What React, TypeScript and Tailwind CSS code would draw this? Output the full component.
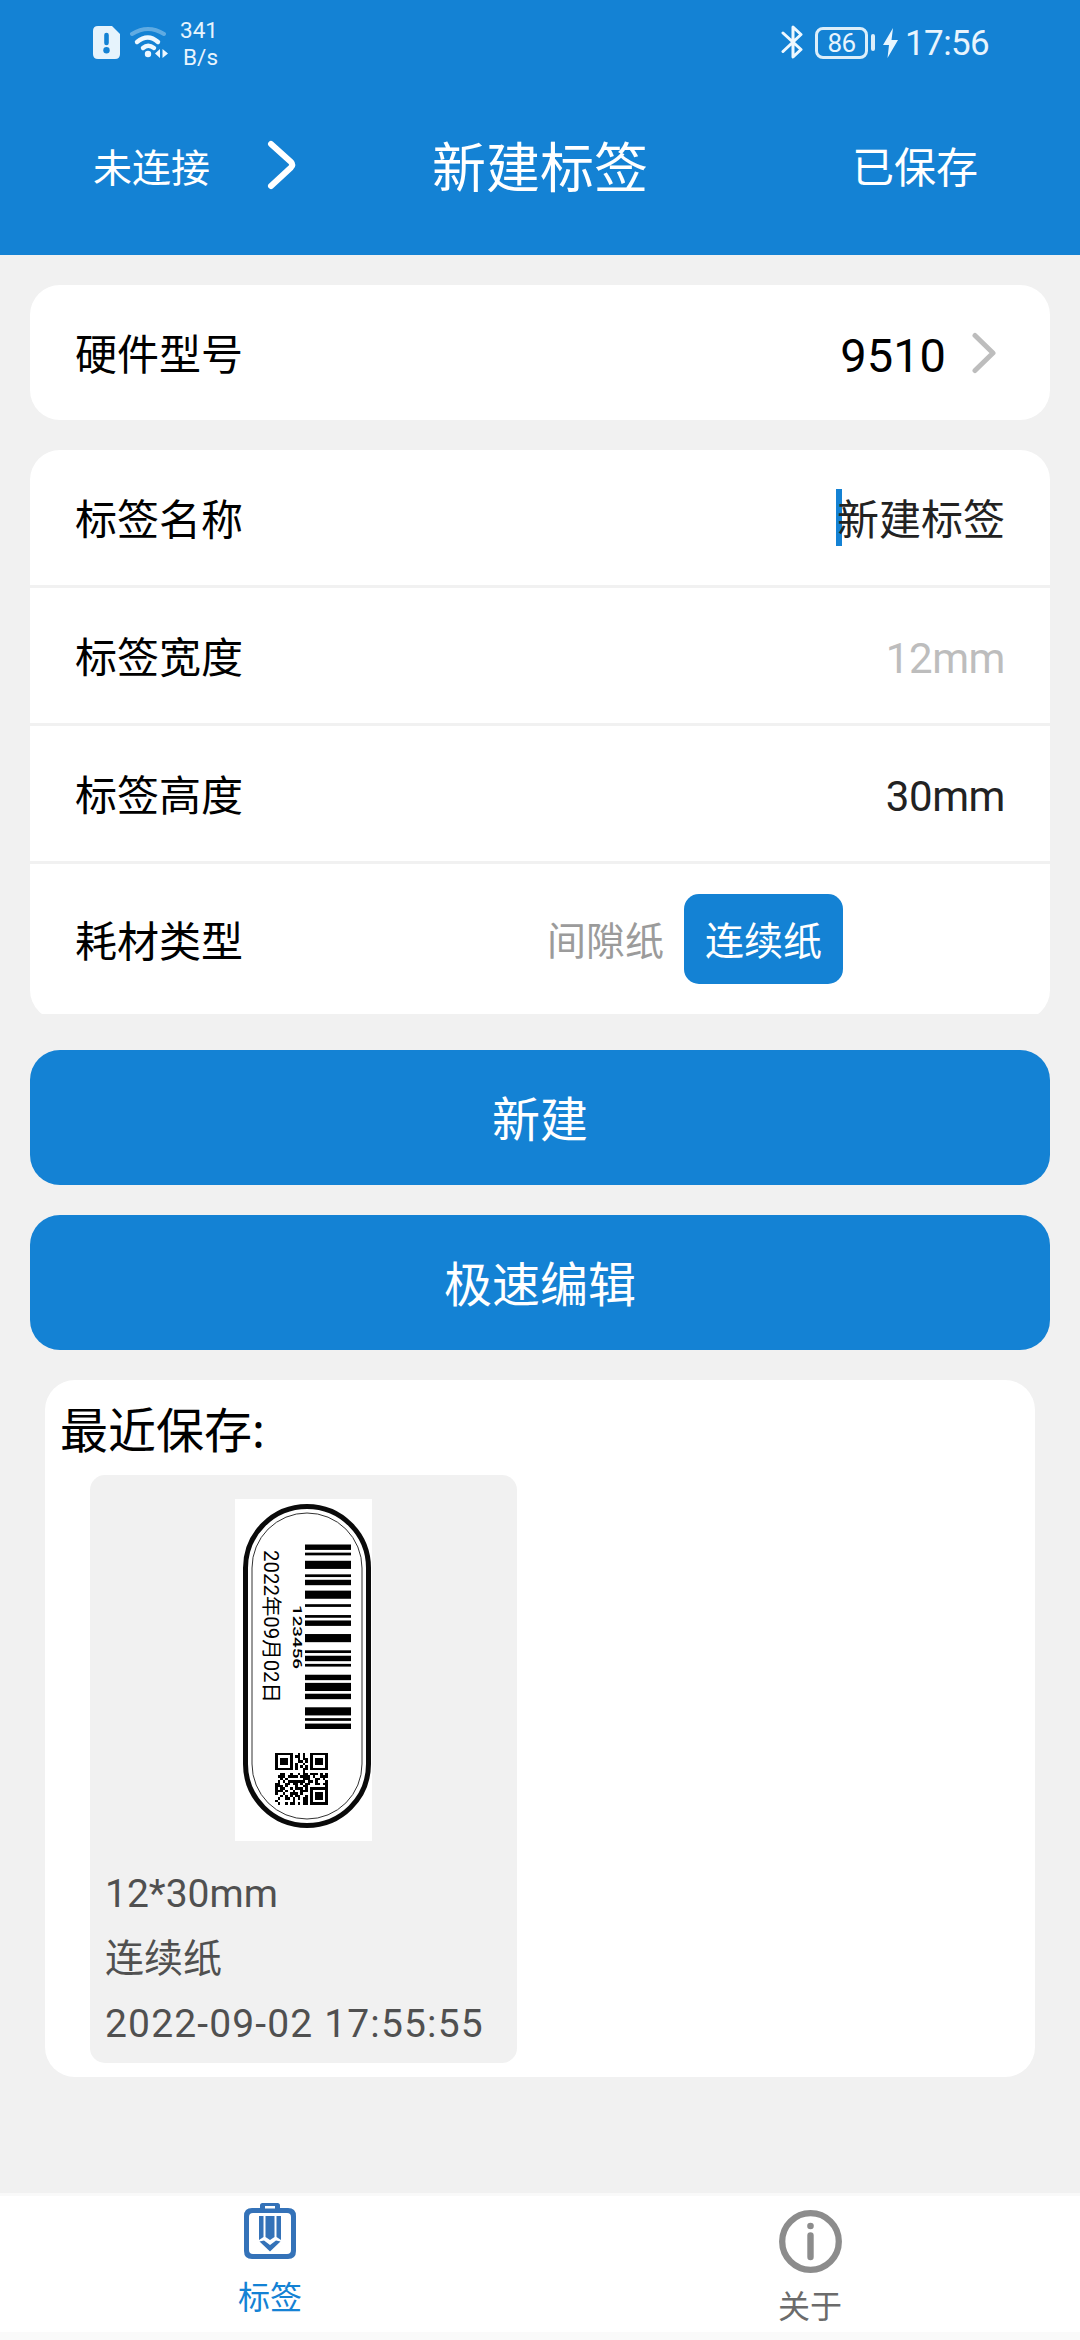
import type { ReactNode } from "react";

const BAR_MODULES = "2112321122321311233311211321312331112";

const QR_ROWS = [
  "#######..#.#..#######",
  "#.....#.##.#..#.....#",
  "#.###.#..#.##.#.###.#",
  "#.###.#..##.#.#.###.#",
  "#.###.#.#..#..#.###.#",
  "#.....#.#.#.#.#.....#",
  "#######.#..##.#######",
  "...........#.........",
  "..##..#..#.##.###.#.#",
  ".###.####.####.#..###",
  "..#.#......###..##.#.",
  ".#.#.#######.##.#...#",
  "##..##.##.#.##..##.##",
  "###.#...#..##.......#",
  "#.##..#.###.#.#######",
  "###.#..#..###.#.....#",
  "#..#..###.#...#.###.#",
  "..#.#.#.##..#.#.###.#",
  ".#..##.#.#.##.#.###.#",
  "#......#...##.#.....#",
  ".#..#.##.#.##.#######",
];

function bars() {
  const unit = 184.5 / 68;
  const out: { y: number; h: number }[] = [];
  let y = 45.5;
  [...BAR_MODULES].forEach((c, i) => {
    const h = Number(c) * unit;
    if (i % 2 === 0) out.push({ y, h });
    y += h;
  });
  return out;
}

function LabelPreview() {
  return (
    <svg width="137" height="342" viewBox="0 0 137 342" className="bg-white">
      <rect x="10.5" y="7.5" width="123" height="319" rx="61.5" fill="none" stroke="#0a0a0a" strokeWidth="5" />
      <rect x="17" y="14" width="110" height="306" rx="55" fill="none" stroke="#333" strokeWidth="1" />
      {bars().map((b) => (
        <rect key={b.y} x="70" y={b.y} width="46" height={b.h} fill="#000" />
      ))}
      <text
        transform="translate(29 51) rotate(90)"
        fontSize="20"
        textLength="153"
        lengthAdjust="spacingAndGlyphs"
        className="font-['Roboto','Noto_Sans_CJK_SC',sans-serif]"
      >
        2022年09月02日
      </text>
      <text
        transform="translate(58 106) rotate(90)"
        fontSize="12.5"
        textLength="64"
        lengthAdjust="spacingAndGlyphs"
        className="font-['Roboto',sans-serif] font-medium"
      >
        123456
      </text>
      <g transform="translate(40 254) scale(2.52 2.46)" shapeRendering="crispEdges">
        {QR_ROWS.flatMap((row, y) =>
          [...row].map((c, x) => (c === "#" ? <rect key={`${x}-${y}`} x={x} y={y} width="1" height="1" /> : null)),
        )}
      </g>
    </svg>
  );
}

function StatusBar() {
  return (
    <div className="flex h-[86px] items-start justify-between pl-[93px] pr-[90px] font-['Roboto',sans-serif] text-[#e8f4fd]">
      <div className="flex items-start">
        <svg width="27" height="33" viewBox="0 0 27 33" className="mt-[26px]">
          <path d="M5 0H19L27 8V28Q27 33 22 33H5Q0 33 0 28V5Q0 0 5 0Z" fill="#e6f3fc" />
          <path d="M13.5 9V17" stroke="#1482d4" strokeWidth="4.6" strokeLinecap="round" />
          <circle cx="13.5" cy="24.3" r="3.2" fill="#1482d4" />
        </svg>
        <svg width="40" height="34" viewBox="0 0 40 34" className="ml-[8px] mt-[25px]" fill="none" strokeLinecap="round">
          <path d="M4 9Q20 -1 36 9" stroke="#60abe2" strokeWidth="4" />
          <path d="M9 17Q20 8 30 17" stroke="#eef8ff" strokeWidth="4.4" />
          <path d="M15 23Q20 18.500 26 23" stroke="#eef8ff" strokeWidth="4.400" />
          <circle cx="20" cy="29" r="3.2" fill="#eef8ff" />
          <path d="M32 24V33L27 28.500ZM34.500 24V33L40 28.500Z" fill="#eef8ff" />
        </svg>
        <div className="ml-[8px] mt-[17px] w-[42px] text-right text-[22.5px] leading-[27px]">
          <div>341</div>
          <div>B/s</div>
        </div>
      </div>
      <div className="flex items-start">
        <svg width="23" height="36" viewBox="0 0 23 36" className="mt-[25px]" fill="none" stroke="#eef8ff" strokeWidth="3" strokeLinejoin="round" strokeLinecap="round">
          <path d="M2 8L20 24.500L12 32V2L20 9.500L2 26.500" />
        </svg>
        <div className="ml-[11px] mt-[27px] flex h-[32px] w-[53px] items-center justify-center rounded-[8px] border-[3px] border-[#dceefa] text-[26px] leading-[26px] tracking-[-0.5px]">
          86
        </div>
        <div className="ml-[3px] mt-[34px] h-[17px] w-[4px] rounded-[2px] bg-[#dceefa]" />
        <svg width="15" height="30" viewBox="0 0 15 30" className="ml-[8px] mt-[28px]" fill="#e8f6ff">
          <path d="M10 0L0 17H6L4.500 30L15 12H8.500Z" />
        </svg>
        <div className="ml-[7px] mt-[23px] w-[85px] whitespace-nowrap text-[35px] leading-[42px] tracking-[-0.6px]">
          17:56
        </div>
      </div>
    </div>
  );
}

function Row({ label, children, className = "" }: { label: string; children?: ReactNode; className?: string }) {
  return (
    <div className={`flex h-[135px] shrink-0 items-center justify-between bg-white pl-[45px] pr-[45px] pt-[3px] ${className}`}>
      <span className="leading-[60px]">{label}</span>
      {children}
    </div>
  );
}

export default function App() {
  return (
    <div className="flex h-[2340px] w-[1080px] flex-col bg-[#f1f1f1] font-['Noto_Sans','Noto_Sans_CJK_SC',sans-serif] text-[42px] text-black">
      <header className="h-[255px] shrink-0 bg-[#1482d4] text-white">
        <StatusBar />
        <div className="grid h-[161px] grid-cols-3 items-center pl-[93px] pr-[102px]">
          <div className="flex items-center">
            <span className="text-[39px] leading-[60px]">未连接</span>
            <svg width="30" height="50" viewBox="0 0 30 50" className="-mt-[3px] ml-[57px]" fill="none" stroke="#fff" strokeWidth="6" strokeLinecap="round" strokeLinejoin="round">
              <path d="M4 4L24 22Q26.500 25 24 27.500L4 46" />
            </svg>
          </div>
          <h1 className="-mr-[9px] text-center text-[54px] leading-[70px]">新建标签</h1>
          <span className="text-right leading-[60px]">已保存</span>
        </div>
      </header>

      <main className="flex grow flex-col px-[30px] pt-[30px]">
        <Row label="硬件型号" className="rounded-[30px]">
          <div className="flex items-center pr-[9px]">
            <span className="pt-[3px] font-['Roboto',sans-serif] text-[47px] leading-[60px]">9510</span>
            <svg width="24" height="42" viewBox="0 0 24 42" className="-mt-[2px] ml-[26px]" fill="none" stroke="#bdbdbd" strokeWidth="5" strokeLinecap="round" strokeLinejoin="round">
              <path d="M3 3.500L21 21L3 38.500" />
            </svg>
          </div>
        </Row>

        <section className="mt-[30px] h-[564px] shrink-0 overflow-hidden">
          <div className="flex h-[570px] flex-col gap-[3px] overflow-hidden rounded-[30px]">
            <Row label="标签名称">
              <span className="relative leading-[60px] text-[#222]">
                <span className="absolute -left-[1px] top-0 h-[57px] w-[6px] bg-[#1482d4]" />
                <span className="relative">新建标签</span>
              </span>
            </Row>
            <Row label="标签宽度">
              <span className="pt-[3px] font-['Roboto',sans-serif] leading-[60px] tracking-[-0.4px] text-[#bdbdbd]">12mm</span>
            </Row>
            <Row label="标签高度">
              <span className="pt-[3px] font-['Roboto',sans-serif] leading-[60px] tracking-[-0.4px] text-[#222]">30mm</span>
            </Row>
            <div className="flex h-[156px] items-start bg-white pl-[45px] pt-[30px]">
              <span className="w-[472px] leading-[93px]">耗材类型</span>
              <span className="w-[137px] text-[39px] leading-[92px] text-[#9b9b9b]">间隙纸</span>
              <span className="h-[90px] w-[159px] rounded-[15px] bg-[#1482d4] text-center text-[39px] leading-[92px] text-white">
                连续纸
              </span>
            </div>
          </div>
        </section>

        <button className="mt-[36px] h-[135px] shrink-0 rounded-[30px] bg-[#1482d4] pt-[3px] text-[48px] leading-[132px] text-white">新建</button>
        <button className="mt-[30px] h-[135px] shrink-0 rounded-[30px] bg-[#1482d4] pt-[3px] text-[48px] leading-[132px] text-white">极速编辑</button>

        <section className="mx-[15px] mt-[30px] h-[697px] shrink-0 rounded-[30px] bg-white px-[15px]">
          <h2 className="h-[95px] pt-[15px] text-[48px] leading-[70px]">最近保存:</h2>
          <div className="ml-[30px] flex h-[588px] w-[427px] flex-col rounded-[15px] bg-[#f1f1f1] pt-[24px]">
            <div className="flex justify-center">
              <LabelPreview />
            </div>
            <div className="mt-[21px] pl-[15px] font-['Roboto','Noto_Sans_CJK_SC',sans-serif] text-[39px] leading-[65px] text-[#505050]">
              <div>12*30mm</div>
              <div>连续纸</div>
              <div className="whitespace-nowrap tracking-[1.15px]">2022-09-02 17:55:55</div>
            </div>
          </div>
        </section>
      </main>

      <nav className="grid h-[147px] shrink-0 grid-cols-2 border-b-[8px] border-t-[3px] border-b-[#fafafa] border-t-[#f9f9f9] bg-white text-[32px] leading-[44px]">
        <div className="flex flex-col items-center pt-[7px] text-[#1482d4]">
          <svg width="52" height="57" viewBox="0 0 52 57" fill="#3472b8">
            <path fillRule="evenodd" d="M16 5V2.500Q16 0 18.500 0H33.500Q36 0 36 2.500V5H44Q52 5 52 13V48Q52 56 44 56H8Q0 56 0 48V13Q0 5 8 5ZM21 3V5.500H31V3ZM9 10Q5 10 5 14V47Q5 51 9 51H43Q47 51 47 47V14Q47 10 43 10Z" />
            <path d="M15 13H19.500V34L15 37ZM21.500 13H30.500V34L26 37L21.500 34ZM32.500 13H37V37L32.500 34Z" />
            <path d="M15.500 38.500L20 37.500L26 42L32 37.500L36.500 38.500L26 48.500Z" />
          </svg>
          <span className="mt-[15px]">标签</span>
        </div>
        <div className="flex flex-col items-center pt-[14px] text-[#6b6b6b]">
          <svg width="63" height="63" viewBox="0 0 63 63" fill="none">
            <circle cx="31.500" cy="31.500" r="28.300" stroke="#8c8c8c" strokeWidth="6.300" />
            <circle cx="31.500" cy="16" r="3.300" fill="#8c8c8c" />
            <path d="M31.500 25.500V47" stroke="#8c8c8c" strokeWidth="6.400" strokeLinecap="round" />
          </svg>
          <span className="mt-[11px]">关于</span>
        </div>
      </nav>
    </div>
  );
}
